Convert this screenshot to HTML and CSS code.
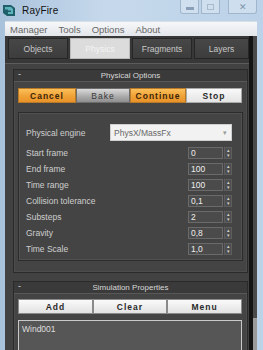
FILE: index.html
```html
<!DOCTYPE html>
<html lang="en">
<head>
  <meta charset="UTF-8" />
  <title>RayFire</title>
  <link rel="stylesheet" href="styles.css">
</head>
<body>
  <div class="window">
    <div class="titlebar">
      <svg class="app-icon" viewBox="0 0 14 13">
        <path d="M1 1 L9 1 L13 4 L13 12 L5 12 L1 9 Z" fill="#1f5f6a"/>
        <path d="M3 3 L9 3 L11 5 L11 10 L6 10 L6 8 L9 8 L9 6.5 L6 6.5 L6 5.5 L3 5.5 Z" fill="#5fb3bd"/>
      </svg>
      <span class="title">RayFire</span>
      <div class="controls">
        <div class="ctl min"><span></span></div>
        <div class="ctl max"><span></span></div>
        <div class="ctl close">&#10005;</div>
      </div>
    </div>

    <div class="client">
      <div class="menubar">
        <span>Manager</span>
        <span>Tools</span>
        <span>Options</span>
        <span>About</span>
      </div>

      <div class="body">
        <div class="main">
          <div class="tabs">
            <div class="tab">Objects</div>
            <div class="tab active">Physics</div>
            <div class="tab">Fragments</div>
            <div class="tab">Layers</div>
          </div>

          <div class="panel">
            <div class="rollout first">
              <div class="rollout-head"><span class="minus">-</span>Physical Options</div>
              <div class="btn-row four">
                <div class="btn orange">Cancel</div>
                <div class="btn grey">Bake</div>
                <div class="btn orange">Continue</div>
                <div class="btn white">Stop</div>
              </div>
              <div class="group">
                <div class="row engine">
                  <span class="label">Physical engine</span>
                  <div class="dropdown">PhysX/MassFx<span class="caret">&#9662;</span></div>
                </div>
                <div class="row"><span class="label">Start frame</span><div class="spinner"><div class="value">0</div><div class="arrows"><span>&#9652;</span><span>&#9662;</span></div></div></div>
                <div class="row"><span class="label">End frame</span><div class="spinner"><div class="value">100</div><div class="arrows"><span>&#9652;</span><span>&#9662;</span></div></div></div>
                <div class="row"><span class="label">Time range</span><div class="spinner"><div class="value">100</div><div class="arrows"><span>&#9652;</span><span>&#9662;</span></div></div></div>
                <div class="row"><span class="label">Collision tolerance</span><div class="spinner"><div class="value">0,1</div><div class="arrows"><span>&#9652;</span><span>&#9662;</span></div></div></div>
                <div class="row"><span class="label">Substeps</span><div class="spinner"><div class="value">2</div><div class="arrows"><span>&#9652;</span><span>&#9662;</span></div></div></div>
                <div class="row"><span class="label">Gravity</span><div class="spinner"><div class="value">0,8</div><div class="arrows"><span>&#9652;</span><span>&#9662;</span></div></div></div>
                <div class="row"><span class="label">Time Scale</span><div class="spinner"><div class="value">1,0</div><div class="arrows"><span>&#9652;</span><span>&#9662;</span></div></div></div>
              </div>
            </div>

            <div class="rollout second">
              <div class="rollout-head"><span class="minus">-</span>Simulation Properties</div>
              <div class="btn-row three">
                <div class="btn light">Add</div>
                <div class="btn light">Clear</div>
                <div class="btn light">Menu</div>
              </div>
              <div class="list">
                <div class="item">Wind001</div>
              </div>
            </div>
          </div>
        </div>
        <div class="scrollbar"><div class="thumb"></div></div>
      </div>
    </div>
  </div>
</body>
</html>
```

FILE: styles.css
```css
* {
  box-sizing: border-box;
}

body {
  margin: 0;
  width: 263px;
  height: 350px;
  overflow: hidden;
  font-family: "Liberation Sans", Arial, sans-serif;
  background: #b7cde3;
}

.window {
  height: 350px;
  display: flex;
  flex-direction: column;
  background: linear-gradient(90deg, #a9c2db, #c6d9ec 40%, #bcd2e8 100%);
}

.titlebar {
  height: 21px;
  display: flex;
  align-items: center;
  padding-left: 2px;
}

.app-icon {
  width: 14px;
  height: 13px;
  margin-right: 6px;
}

.title {
  font-size: 10px;
  color: #111;
  letter-spacing: 0.2px;
}

.controls {
  margin-left: auto;
  margin-right: 6px;
  display: flex;
  align-self: flex-start;
  gap: 2px;
}

.ctl {
  height: 14px;
  border: 1px solid #9fb6cc;
  border-top: none;
  display: flex;
  align-items: center;
  justify-content: center;
  background: rgba(255, 255, 255, 0.25);
}

.ctl.min {
  width: 19px;
  border-radius: 0 0 0 3px;
}

.ctl.min span {
  width: 8px;
  height: 3px;
  background: #8aa0b8;
  margin-top: 4px;
}

.ctl.max {
  width: 19px;
}

.ctl.max span {
  width: 7px;
  height: 6px;
  border: 1px solid #a8bcd0;
}

.ctl.close {
  width: 29px;
  border-radius: 0 0 3px 0;
  font-size: 9px;
  color: #7d93aa;
  margin-left: 6px;
}

.client {
  flex: 1;
  margin: 0 6px 0 5px;
  display: flex;
  flex-direction: column;
  min-height: 0;
}

.menubar {
  height: 15px;
  background: linear-gradient(#f6f7f9, #e3e6ea);
  border-top: 1px solid #d8dee6;
  display: flex;
  align-items: center;
  gap: 11px;
  padding-left: 5px;
  font-size: 9.5px;
  color: #686868;
}

.body {
  flex: 1;
  display: flex;
  min-height: 0;
  background: #353535;
}

.main {
  flex: 1;
  display: flex;
  flex-direction: column;
  min-width: 0;
}

.tabs {
  height: 27px;
  display: flex;
  gap: 2px;
  padding: 2px 0 0 3px;
  background: #383838;
}

.tab {
  height: 21px;
  width: 60px;
  border: 1px solid #262626;
  background: linear-gradient(#474747, #3d3d3d);
  color: #c8c8c8;
  font-size: 8.5px;
  display: flex;
  align-items: center;
  justify-content: center;
}

.tab:last-child {
  width: 55px;
}

.tab.active {
  background: #dcdcdc;
  color: #f4f4f4;
  border-color: #bbb;
}

.panel {
  flex: 1;
  min-height: 0;
  border-top: 1px solid #5c5c5c;
  background: #424242;
  padding: 5px 1px 0 8px;
  display: flex;
  flex-direction: column;
}

.rollout {
  border: 1px solid #2a2a2a;
  box-shadow: inset 0 0 0 1px #4d4d4d;
  background: #444;
  padding: 0 5px 0 4px;
}

.rollout.first {
  padding-bottom: 11px;
}

.rollout.second {
  margin-top: 8px;
  flex: 1;
  border-bottom: none;
}

.rollout-head {
  height: 12px;
  margin: 0 -5px 0 -4px;
  background: #3a3a3a;
  border-bottom: 1px solid #585858;
  color: #d8d8d8;
  font-size: 8px;
  display: flex;
  align-items: center;
  justify-content: center;
  position: relative;
}

.minus {
  position: absolute;
  left: 4px;
  top: -1px;
  color: #ddd;
  font-size: 9px;
}

.btn-row {
  display: grid;
  height: 15px;
  margin-top: 6px;
}

.btn-row.four {
  grid-template-columns: 58px 54px 56px 1fr;
}

.btn-row.three {
  margin-top: 5px;
  grid-template-columns: 75px 74px 1fr;
}

.btn {
  display: flex;
  align-items: center;
  justify-content: center;
  font-size: 8.5px;
  font-weight: bold;
  letter-spacing: 1px;
  color: #2a2a2a;
  border: 1px solid #6d6d6d;
}

.btn.orange {
  background: linear-gradient(#fbbf5a, #f0a236 55%, #e8922a);
  border-color: #b97a27;
  color: #3b2508;
}

.btn.grey {
  background: linear-gradient(#dadada, #a9a9a9 60%, #8f8f8f);
  color: #3a3a3a;
  font-weight: normal;
}

.btn.white {
  background: linear-gradient(#f9f9f9, #e4e4e4);
  border-color: #aaa;
}

.btn.light {
  background: linear-gradient(#fafafa, #e2e2e2);
  border-color: #8a8a8a;
}

.group {
  margin-top: 9px;
  margin-right: -1px;
  border: 1px solid #2c2c2c;
  box-shadow: inset 0 0 0 1px #505050;
  padding: 11px 10px 3px 7px;
}

.row {
  height: 16px;
  display: flex;
  align-items: center;
  font-size: 8.5px;
  color: #cfcfcf;
}

.row.engine {
  height: 17px;
  margin-bottom: 4px;
}

.label {
  flex: 1;
}

.dropdown {
  width: 122px;
  height: 17px;
  background: #f2f2f2;
  border: 1px solid #cfcfcf;
  color: #676767;
  font-size: 8.5px;
  display: flex;
  align-items: center;
  padding-left: 3px;
}

.caret {
  margin-left: auto;
  margin-right: 4px;
  color: #999;
  font-size: 7px;
}

.spinner {
  display: flex;
  gap: 1px;
  height: 12px;
}

.value {
  width: 35px;
  background: #4b4b4b;
  border: 1px solid #6a6a6a;
  color: #eee;
  font-size: 8.5px;
  padding-left: 2px;
  display: flex;
  align-items: center;
}

.arrows {
  width: 8px;
  background: #4e4e4e;
  border: 1px solid #5e5e5e;
  display: flex;
  flex-direction: column;
  align-items: center;
  justify-content: center;
  color: #d0d0d0;
  font-size: 5px;
  line-height: 5px;
}

.list {
  margin-top: 6px;
  margin-bottom: -1px;
  height: 40px;
  background: #565656;
  border: 1px solid #c8c8c8;
  padding: 3px 3px;
}

.item {
  font-size: 8.5px;
  color: #dedede;
}

.scrollbar {
  width: 8px;
  border-left: 4px solid #141414;
  background: #4a4a4a;
  display: flex;
  flex-direction: column;
  justify-content: flex-end;
}

.thumb {
  height: 32px;
  background: #9a9a9a;
}
```
